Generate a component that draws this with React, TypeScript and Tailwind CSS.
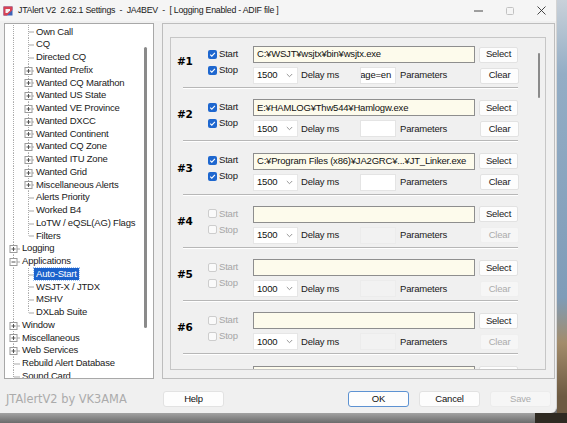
import React from "react";

type TreeNode = {
  label: string;
  level: 0 | 1;
  box?: "plus" | "minus";
  last?: boolean;
  selected?: boolean;
};

const tree: TreeNode[] = [
  { label: "Own Call", level: 1 },
  { label: "CQ", level: 1 },
  { label: "Directed CQ", level: 1 },
  { label: "Wanted Prefix", level: 1, box: "plus" },
  { label: "Wanted CQ Marathon", level: 1, box: "plus" },
  { label: "Wanted US State", level: 1, box: "plus" },
  { label: "Wanted VE Province", level: 1, box: "plus" },
  { label: "Wanted DXCC", level: 1, box: "plus" },
  { label: "Wanted Continent", level: 1, box: "plus" },
  { label: "Wanted CQ Zone", level: 1, box: "plus" },
  { label: "Wanted ITU Zone", level: 1, box: "plus" },
  { label: "Wanted Grid", level: 1, box: "plus" },
  { label: "Miscellaneous Alerts", level: 1, box: "plus" },
  { label: "Alerts Priority", level: 1 },
  { label: "Worked B4", level: 1 },
  { label: "LoTW / eQSL(AG) Flags", level: 1 },
  { label: "Filters", level: 1, last: true },
  { label: "Logging", level: 0, box: "plus" },
  { label: "Applications", level: 0, box: "minus" },
  { label: "Auto-Start", level: 1, selected: true },
  { label: "WSJT-X / JTDX", level: 1 },
  { label: "MSHV", level: 1 },
  { label: "DXLab Suite", level: 1, last: true },
  { label: "Window", level: 0, box: "plus" },
  { label: "Miscellaneous", level: 0, box: "plus" },
  { label: "Web Services", level: 0, box: "plus" },
  { label: "Rebuild Alert Database", level: 0 },
  { label: "Sound Card", level: 0 },
];

type AppRow = {
  n: number;
  on: boolean;
  path: string;
  delay: string;
  params?: string;
};

const rows: AppRow[] = [
  { n: 1, on: true, path: "C:¥WSJT¥wsjtx¥bin¥wsjtx.exe", delay: "1500", params: "language=en" },
  { n: 2, on: true, path: "E:¥HAMLOG¥Thw544¥Hamlogw.exe", delay: "1500", params: "" },
  { n: 3, on: true, path: "C:¥Program Files (x86)¥JA2GRC¥...¥JT_Linker.exe", delay: "1500", params: "" },
  { n: 4, on: false, path: "", delay: "1500" },
  { n: 5, on: false, path: "", delay: "1000" },
  { n: 6, on: false, path: "", delay: "1000" },
  { n: 7, on: false, path: "", delay: "1000" },
];

const LINE = "#a9a9a9";
const H = 12.75;
const CY = 6.5;

function Expander({ x, kind }: { x: number; kind: "plus" | "minus" }) {
  return (
    <g>
      <rect x={x + 0.5} y={CY - 3} width={7} height={7} fill="#fff" stroke="#9a9a9a" />
      <line x1={x + 2} y1={CY + 0.5} x2={x + 6} y2={CY + 0.5} stroke="#555" />
      {kind === "plus" && <line x1={x + 4} y1={CY - 1.5} x2={x + 4} y2={CY + 2.5} stroke="#555" />}
    </g>
  );
}

function Gutter({ node }: { node: TreeNode }) {
  const w = node.level === 1 ? 29 : 15;
  return (
    <svg width={w} height={H} className="shrink-0">
      <line x1={8.5} y1={0} x2={8.5} y2={H} stroke={LINE} strokeDasharray="1 1" />
      {node.level === 1 ? (
        <>
          <line x1={23.5} y1={0} x2={23.5} y2={node.last ? CY : H} stroke={LINE} strokeDasharray="1 1" />
          {node.box ? (
            <>
              <line x1={27} y1={CY + 0.5} x2={w} y2={CY + 0.5} stroke={LINE} />
              <Expander x={19.5} kind={node.box} />
            </>
          ) : (
            <line x1={24} y1={CY + 0.5} x2={w} y2={CY + 0.5} stroke={LINE} />
          )}
        </>
      ) : node.box ? (
        <>
          <line x1={12} y1={CY + 0.5} x2={w} y2={CY + 0.5} stroke={LINE} />
          <Expander x={4.5} kind={node.box} />
        </>
      ) : (
        <line x1={9} y1={CY + 0.5} x2={w} y2={CY + 0.5} stroke={LINE} />
      )}
    </svg>
  );
}

function TreePanel() {
  return (
    <div className="w-[150px] border border-[#a8a8a8] bg-white flex overflow-hidden">
      <div className="flex-1 pt-[1.3px] overflow-hidden">
        {tree.map((node) => (
          <div key={node.label} className="flex items-center h-[12.75px]">
            <Gutter node={node} />
            <span
              className={
                node.selected
                  ? "px-[2px] leading-[12px] bg-[#1b62cc] text-white outline outline-1 outline-dotted outline-[#9cc0f0] whitespace-nowrap"
                  : "px-[2px] leading-[12px] text-[#1a1a1a] whitespace-nowrap"
              }
            >
              {node.label}
            </span>
          </div>
        ))}
      </div>
      <div className="w-[9px] shrink-0">
        <div className="mt-[23px] w-[2.5px] h-[281px] rounded-full bg-[#8a8a8a]" />
      </div>
    </div>
  );
}

function Check({ on }: { on: boolean }) {
  if (on) {
    return (
      <span className="w-[9px] h-[9px] rounded-[2px] bg-[#1e67cf] flex items-center justify-center">
        <svg width="7" height="7" viewBox="0 0 7 7">
          <polyline points="1.2,3.6 2.8,5.1 5.9,1.8" fill="none" stroke="#fff" strokeWidth="1.1" />
        </svg>
      </span>
    );
  }
  return <span className="w-[9px] h-[9px] rounded-[2px] bg-[#fafafa] border border-[#cdcdcd]" />;
}

function Btn({ label, disabled }: { label: string; disabled?: boolean }) {
  return (
    <div
      className={
        disabled
          ? "w-[39px] h-[16px] shrink-0 rounded-[2px] border border-[#efefef] bg-[#f6f6f6] text-[#ababab] flex items-center justify-center"
          : "w-[39px] h-[16px] shrink-0 rounded-[2px] border border-[#e2e2e2] bg-[#fdfdfd] text-[#1a1a1a] flex items-center justify-center"
      }
    >
      {label}
    </div>
  );
}

function Row({ row, first }: { row: AppRow; first: boolean }) {
  const labelColor = row.on ? "text-[#1a1a1a]" : "text-[#a6a6a6]";
  return (
    <div>
      {!first && <div className="ml-[12px] w-[335px] h-[2px] border-t border-t-[#b7b7b7] border-b border-b-white" />}
      <div className={`flex pl-[6px] pb-[3px] ${first ? "pt-[8px]" : "pt-[10.3px]"}`}>
        <div className="w-[31px] shrink-0 pt-[9px] leading-[13px] font-bold text-[10.5px] text-black [font-family:'DejaVu_Sans',sans-serif]">
          #{row.n}
        </div>
        <div className="w-[45px] shrink-0 flex flex-col">
          <div className={`h-[16px] flex items-center gap-[2px] ${labelColor}`}>
            <Check on={row.on} />
            <span>Start</span>
          </div>
          <div className={`h-[16px] flex items-center gap-[2px] ${labelColor}`}>
            <Check on={row.on} />
            <span>Stop</span>
          </div>
        </div>
        <div className="w-[266px] shrink-0 flex flex-col">
          <div className="h-[17px] flex items-center gap-[4px]">
            <div className="w-[222px] h-[17px] border border-[#8e8e8e] bg-[#fdfbec] px-[3px] flex items-center text-[#111] whitespace-nowrap overflow-hidden">
              {row.path}
            </div>
            <Btn label="Select" />
          </div>
          <div className="mt-[4px] h-[17px] flex items-center">
            <div className="w-[45px] h-[17px] shrink-0 bg-white border border-[#e6e6e6] flex items-center justify-between pl-[3px] pr-[4px] text-[#111]">
              <span>{row.delay}</span>
              <svg width="7" height="5" viewBox="0 0 7 5">
                <polyline points="0.8,1 3.5,3.7 6.2,1" fill="none" stroke="#8a8a8a" strokeWidth="0.9" />
              </svg>
            </div>
            <div className="w-[62px] shrink-0 pl-[3px] text-[#1a1a1a]">Delay ms</div>
            {row.params !== undefined ? (
              <div className="w-[36px] h-[17px] shrink-0 bg-white border border-[#e4e4e4] flex items-center justify-end pr-[4px] overflow-hidden whitespace-nowrap text-[#111]">
                {row.params}
              </div>
            ) : (
              <div className="w-[36px] h-[17px] shrink-0 bg-[#f2f2f2] border border-[#ececec]" />
            )}
            <div className="flex-1 pl-[4px] text-[#1a1a1a]">Parameters</div>
            <Btn label="Clear" disabled={!row.on} />
          </div>
        </div>
      </div>
    </div>
  );
}

function AutoStartPanel() {
  return (
    <div className="w-[393px] border border-[#bdbdbd] pt-[13px] pl-[7px] pr-[8px] pb-[8px] flex">
      <div className="flex-1 border border-[#c6c6c6] flex overflow-hidden">
        <div className="flex-1 overflow-hidden">
          {rows.map((r, i) => (
            <Row key={r.n} row={r} first={i === 0} />
          ))}
        </div>
        <div className="w-[12px] shrink-0 pl-[5px]">
          <div className="mt-[15px] w-[2px] h-[45px] rounded-full bg-[#8a8a8a]" />
        </div>
      </div>
    </div>
  );
}

function TitleBar() {
  return (
    <div className="h-[21px] bg-[#f5f5f5] flex items-center pl-[3px]">
      <svg width="10" height="10" viewBox="0 0 10 10" className="shrink-0">
        <rect x="0.5" y="0.5" width="9" height="9" fill="#3d63b8" />
        <path d="M0.5 0.5 L9.5 0.5 L9.5 4 L4 9.5 L0.5 9.5 Z" fill="#d94152" />
        <path d="M2.5 3 L7 3 L7 4.5 L4.5 7 L2.5 7 Z" fill="#f2f2f2" />
      </svg>
      <div className="ml-[5px] flex-1 whitespace-pre text-[8.8px] text-[#202020] tracking-[-0.25px]">
        JTAlert V2  2.62.1 Settings  -  JA4BEV  -  [ Logging Enabled - ADIF file ]
      </div>
      <div className="flex h-full">
        <div className="w-[31px] flex items-center justify-center">
          <svg width="9" height="2" viewBox="0 0 9 2">
            <line x1="0" y1="1" x2="9" y2="1" stroke="#333" strokeWidth="0.9" />
          </svg>
        </div>
        <div className="w-[31px] flex items-center justify-center">
          <svg width="8" height="8" viewBox="0 0 8 8">
            <rect x="0.5" y="0.5" width="7" height="7" rx="1" fill="none" stroke="#c2c2c2" />
          </svg>
        </div>
        <div className="w-[31px] flex items-center justify-center pl-[2px]">
          <svg width="9" height="9" viewBox="0 0 9 9">
            <path d="M0.5 0.5 L8.5 8.5 M8.5 0.5 L0.5 8.5" stroke="#333" strokeWidth="0.9" />
          </svg>
        </div>
      </div>
    </div>
  );
}

function FooterBtn({ label, kind }: { label: string; kind?: "default" | "disabled" }) {
  const base = "w-[61px] h-[16px] shrink-0 rounded-[3px] flex items-center justify-center";
  if (kind === "default") return <div className={`${base} border border-[#5d92d2] bg-[#fdfdfd] text-[#111]`}>{label}</div>;
  if (kind === "disabled") return <div className={`${base} border border-[#ececec] bg-[#f6f6f6] text-[#adadad]`}>{label}</div>;
  return <div className={`${base} border border-[#e2e2e2] bg-[#fdfdfd] text-[#111]`}>{label}</div>;
}

export default function App() {
  return (
    <div className="w-[567px] h-[423px] overflow-hidden flex flex-col text-[9.5px] tracking-[-0.2px] [font-family:'Liberation_Sans',Arial,sans-serif] bg-[#6f6f6f]">
      <div className="h-[413px] flex shrink-0">
        <div className="w-[557px] shrink-0 bg-[#f0f0f0] flex flex-col rounded-br-[6px] border-r border-[#d4d4d4]">
          <TitleBar />
          <div className="h-[358px] pt-[2px] pl-[4px] flex gap-[8px]">
            <TreePanel />
            <AutoStartPanel />
          </div>
          <div className="flex-1 flex items-start pt-[12px]">
            <div className="w-[163px] shrink-0 pl-[6px] pt-[1px] text-[11.4px] tracking-[0px] text-[#ababab] [font-family:'DejaVu_Sans',sans-serif] leading-[14px]">
              JTAlertV2 by VK3AMA
            </div>
            <FooterBtn label="Help" />
            <div className="flex-1" />
            <div className="flex gap-[10px] pr-[5px]">
              <FooterBtn label="OK" kind="default" />
              <FooterBtn label="Cancel" />
              <FooterBtn label="Save" kind="disabled" />
            </div>
          </div>
        </div>
        <div className="flex-1 bg-[linear-gradient(to_bottom,#c9d1d9_0%,#93adc5_18%,#7f9cb8_72%,#a38c6b_83%,#6d5a42_96%)]" />
      </div>
      <div className="flex-1 flex">
        <div className="w-[535px] bg-[linear-gradient(to_bottom,#a3a3a3,#6c6c6c)]" />
        <div className="flex-1 bg-[#2f2a22]" />
      </div>
    </div>
  );
}
